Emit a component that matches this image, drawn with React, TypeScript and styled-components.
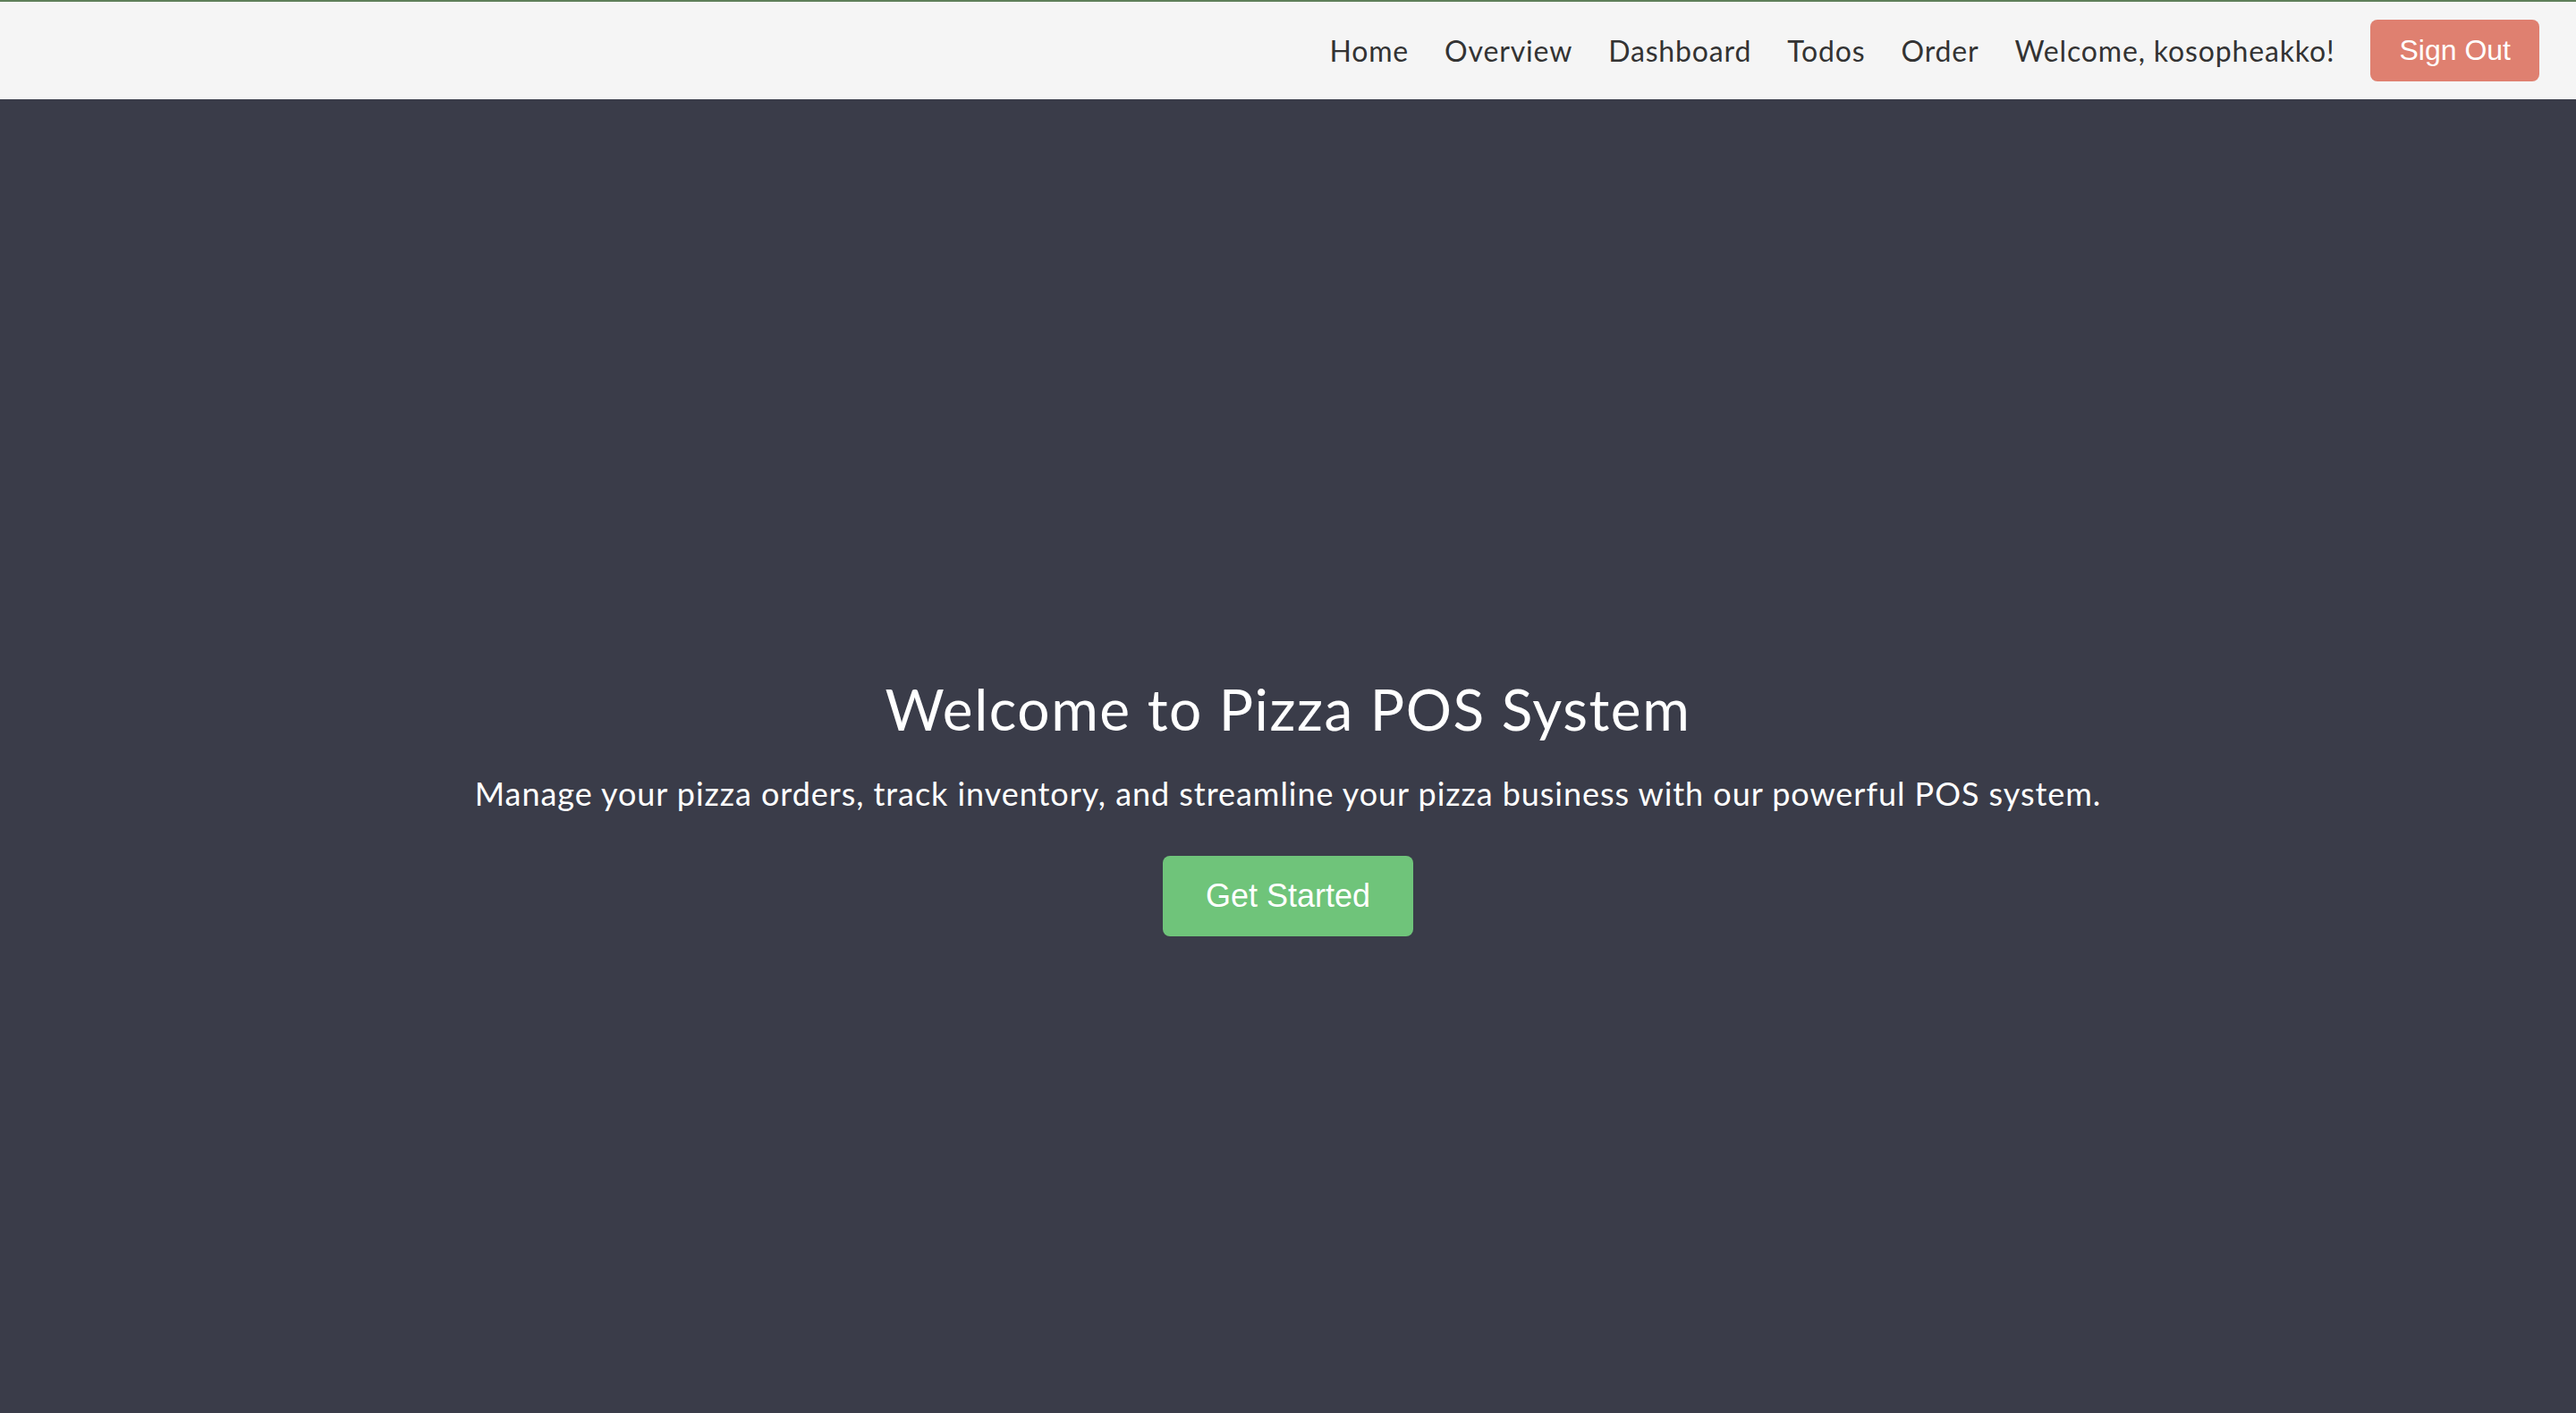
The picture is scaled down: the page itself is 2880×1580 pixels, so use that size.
import styled, { createGlobalStyle } from 'styled-components';

const GlobalStyle = createGlobalStyle`
  * {
    box-sizing: border-box;
  }
  body {
    margin: 0;
    font-family: Lato, "Noto Sans", sans-serif;
    background: #3a3c49;
  }
`;

const NavBar = styled.nav`
  display: flex;
  justify-content: flex-end;
  align-items: center;
  height: 111px;
  padding: 0 41px;
  border-top: 2px solid #5f7f5a;
  background: #f5f5f5;
`;

const NavList = styled.ul`
  display: flex;
  align-items: center;
  gap: 40px;
  margin: 0;
  padding: 0;
  list-style: none;
`;

const NavLink = styled.a`
  font-size: 32px;
  letter-spacing: 0.85px;
  color: #333;
  text-decoration: none;
  cursor: pointer;
`;

const Button = styled.button<{ $color: string; $size: number }>`
  border: none;
  border-radius: 8px;
  background: ${({ $color }) => $color};
  color: #fff;
  font-family: "Liberation Sans", Arial, sans-serif;
  font-size: ${({ $size }) => $size}px;
  padding: ${({ $size }) => ($size > 32 ? '24px 48px' : '16px 32px')};
  cursor: pointer;
`;

const Hero = styled.section`
  display: flex;
  flex-direction: column;
  align-items: center;
  justify-content: center;
  min-height: 100vh;
  color: #fff;
  text-align: center;
`;

const Title = styled.h1`
  margin: 0 0 34px;
  font-size: 64px;
  font-weight: 400;
  letter-spacing: 1.55px;
  line-height: 1.2;
`;

const Subtitle = styled.p`
  margin: 0 0 48px;
  font-size: 36px;
  letter-spacing: 0.95px;
  line-height: 1.2;
`;

const links = ['Home', 'Overview', 'Dashboard', 'Todos', 'Order'];

export default function App() {
  return (
    <>
      <GlobalStyle />
      <NavBar>
        <NavList>
          {links.map((l) => (
            <li key={l}>
              <NavLink>{l}</NavLink>
            </li>
          ))}
          <li>
            <NavLink>Welcome, kosopheakko!</NavLink>
          </li>
          <li>
            <Button $color="#df8070" $size={32}>Sign Out</Button>
          </li>
        </NavList>
      </NavBar>
      <Hero>
        <Title>Welcome to Pizza POS System</Title>
        <Subtitle>
          Manage your pizza orders, track inventory, and streamline your pizza business with our powerful POS system.
        </Subtitle>
        <Button $color="#6fc47a" $size={36}>Get Started</Button>
      </Hero>
    </>
  );
}
